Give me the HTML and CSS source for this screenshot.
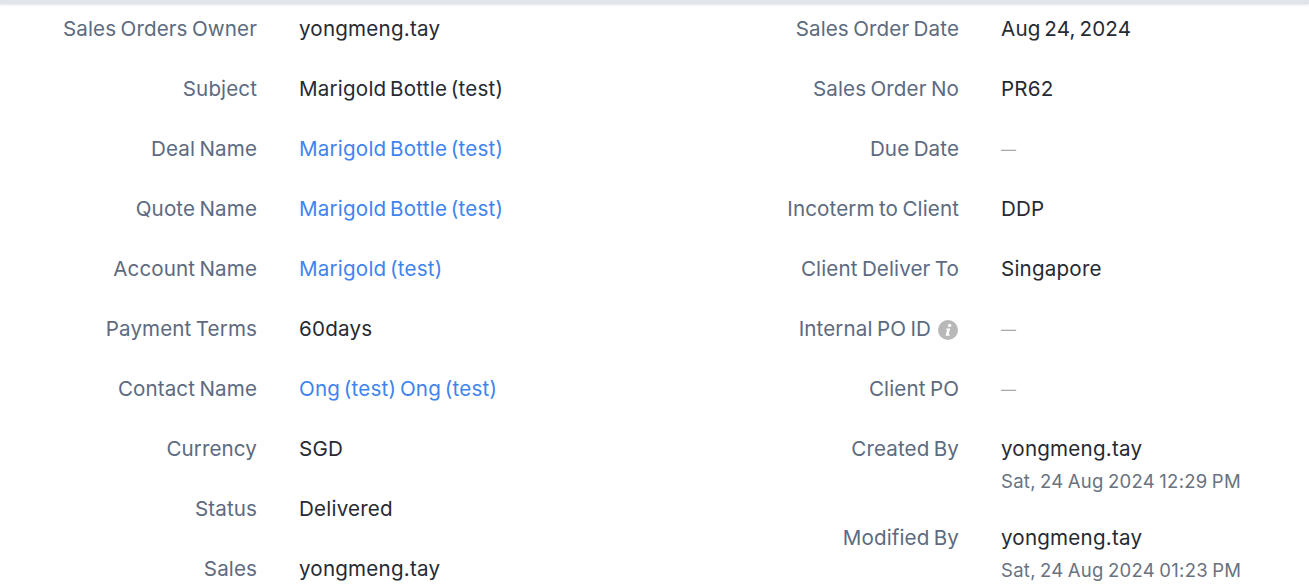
FILE: index.html
```html
<!DOCTYPE html>
<html lang="en">
<head>
<meta charset="utf-8">
<title>Sales Order</title>
<link rel="stylesheet" href="styles.css">
</head>
<body>
<div class="topbar"></div>
<div class="page">
  <div class="col col-left">
    <div class="row"><div class="label">Sales Orders Owner</div><div class="value">yongmeng.tay</div></div>
    <div class="row"><div class="label">Subject</div><div class="value">Marigold Bottle (test)</div></div>
    <div class="row"><div class="label">Deal Name</div><div class="value link">Marigold Bottle (test)</div></div>
    <div class="row"><div class="label">Quote Name</div><div class="value link">Marigold Bottle (test)</div></div>
    <div class="row"><div class="label">Account Name</div><div class="value link">Marigold (test)</div></div>
    <div class="row"><div class="label">Payment Terms</div><div class="value">60days</div></div>
    <div class="row"><div class="label">Contact Name</div><div class="value link">Ong (test) Ong (test)</div></div>
    <div class="row"><div class="label">Currency</div><div class="value">SGD</div></div>
    <div class="row"><div class="label">Status</div><div class="value">Delivered</div></div>
    <div class="row"><div class="label">Sales</div><div class="value">yongmeng.tay</div></div>
  </div>
  <div class="col col-right">
    <div class="row"><div class="label">Sales Order Date</div><div class="value">Aug 24, 2024</div></div>
    <div class="row"><div class="label">Sales Order No</div><div class="value">PR62</div></div>
    <div class="row"><div class="label">Due Date</div><div class="value empty">—</div></div>
    <div class="row"><div class="label">Incoterm to Client</div><div class="value">DDP</div></div>
    <div class="row"><div class="label">Client Deliver To</div><div class="value">Singapore</div></div>
    <div class="row"><div class="label">Internal PO ID<svg class="info" viewBox="0 0 20 20"><circle cx="10" cy="10" r="10" fill="#b8b8b8"/><circle cx="11.6" cy="5.4" r="1.7" fill="#fff"/><path d="M8.2 8.4h3.9l-1.5 6.2h1.3l-.3 1.2H7.6l1.5-6.2H7.9z" fill="#fff"/></svg></div><div class="value empty">—</div></div>
    <div class="row"><div class="label">Client PO</div><div class="value empty">—</div></div>
    <div class="row row-stack"><div class="label">Created By</div><div class="value">yongmeng.tay<div class="sub">Sat, 24 Aug 2024 12:29 PM</div></div></div>
    <div class="row row-stack"><div class="label">Modified By</div><div class="value">yongmeng.tay<div class="sub">Sat, 24 Aug 2024 01:23 PM</div></div></div>
  </div>
</div>
</body>
</html>
```
FILE: styles.css
```css
html, body { margin: 0; padding: 0; height: 584px; overflow: hidden; background: #fff; }
body { font-family: "Inter", "Liberation Sans", sans-serif; font-size: 20.6px; }
.topbar { height: 4px; background: #e1e4e9; box-shadow: 0 1px 3px #e1e4e9; }
.page { display: flex; padding-top: 10px; }
.col-left { width: 702px; }
.col { display: flex; flex-direction: column; }
.row { display: flex; height: 60px; column-gap: 42px; line-height: 30px; }
.row-stack { height: 89px; }
.label { width: 257px; text-align: right; color: #5d6a80; flex: none; letter-spacing: .1px; word-spacing: -1.5px; }
.value { color: #262a33; letter-spacing: .2px; word-spacing: -2.3px; }
.link { color: #3f84ee; }
.empty { color: #a8a8a8; font-size: 15px; padding-top: 1px; letter-spacing: 0; }
.sub { color: #69727f; font-size: 18.5px; line-height: 30px; padding-top: 2px; letter-spacing: .3px; word-spacing: -1.3px; }
.info { width: 20px; height: 20px; margin-left: 7px; margin-right: 1px; vertical-align: -4px; }
```
